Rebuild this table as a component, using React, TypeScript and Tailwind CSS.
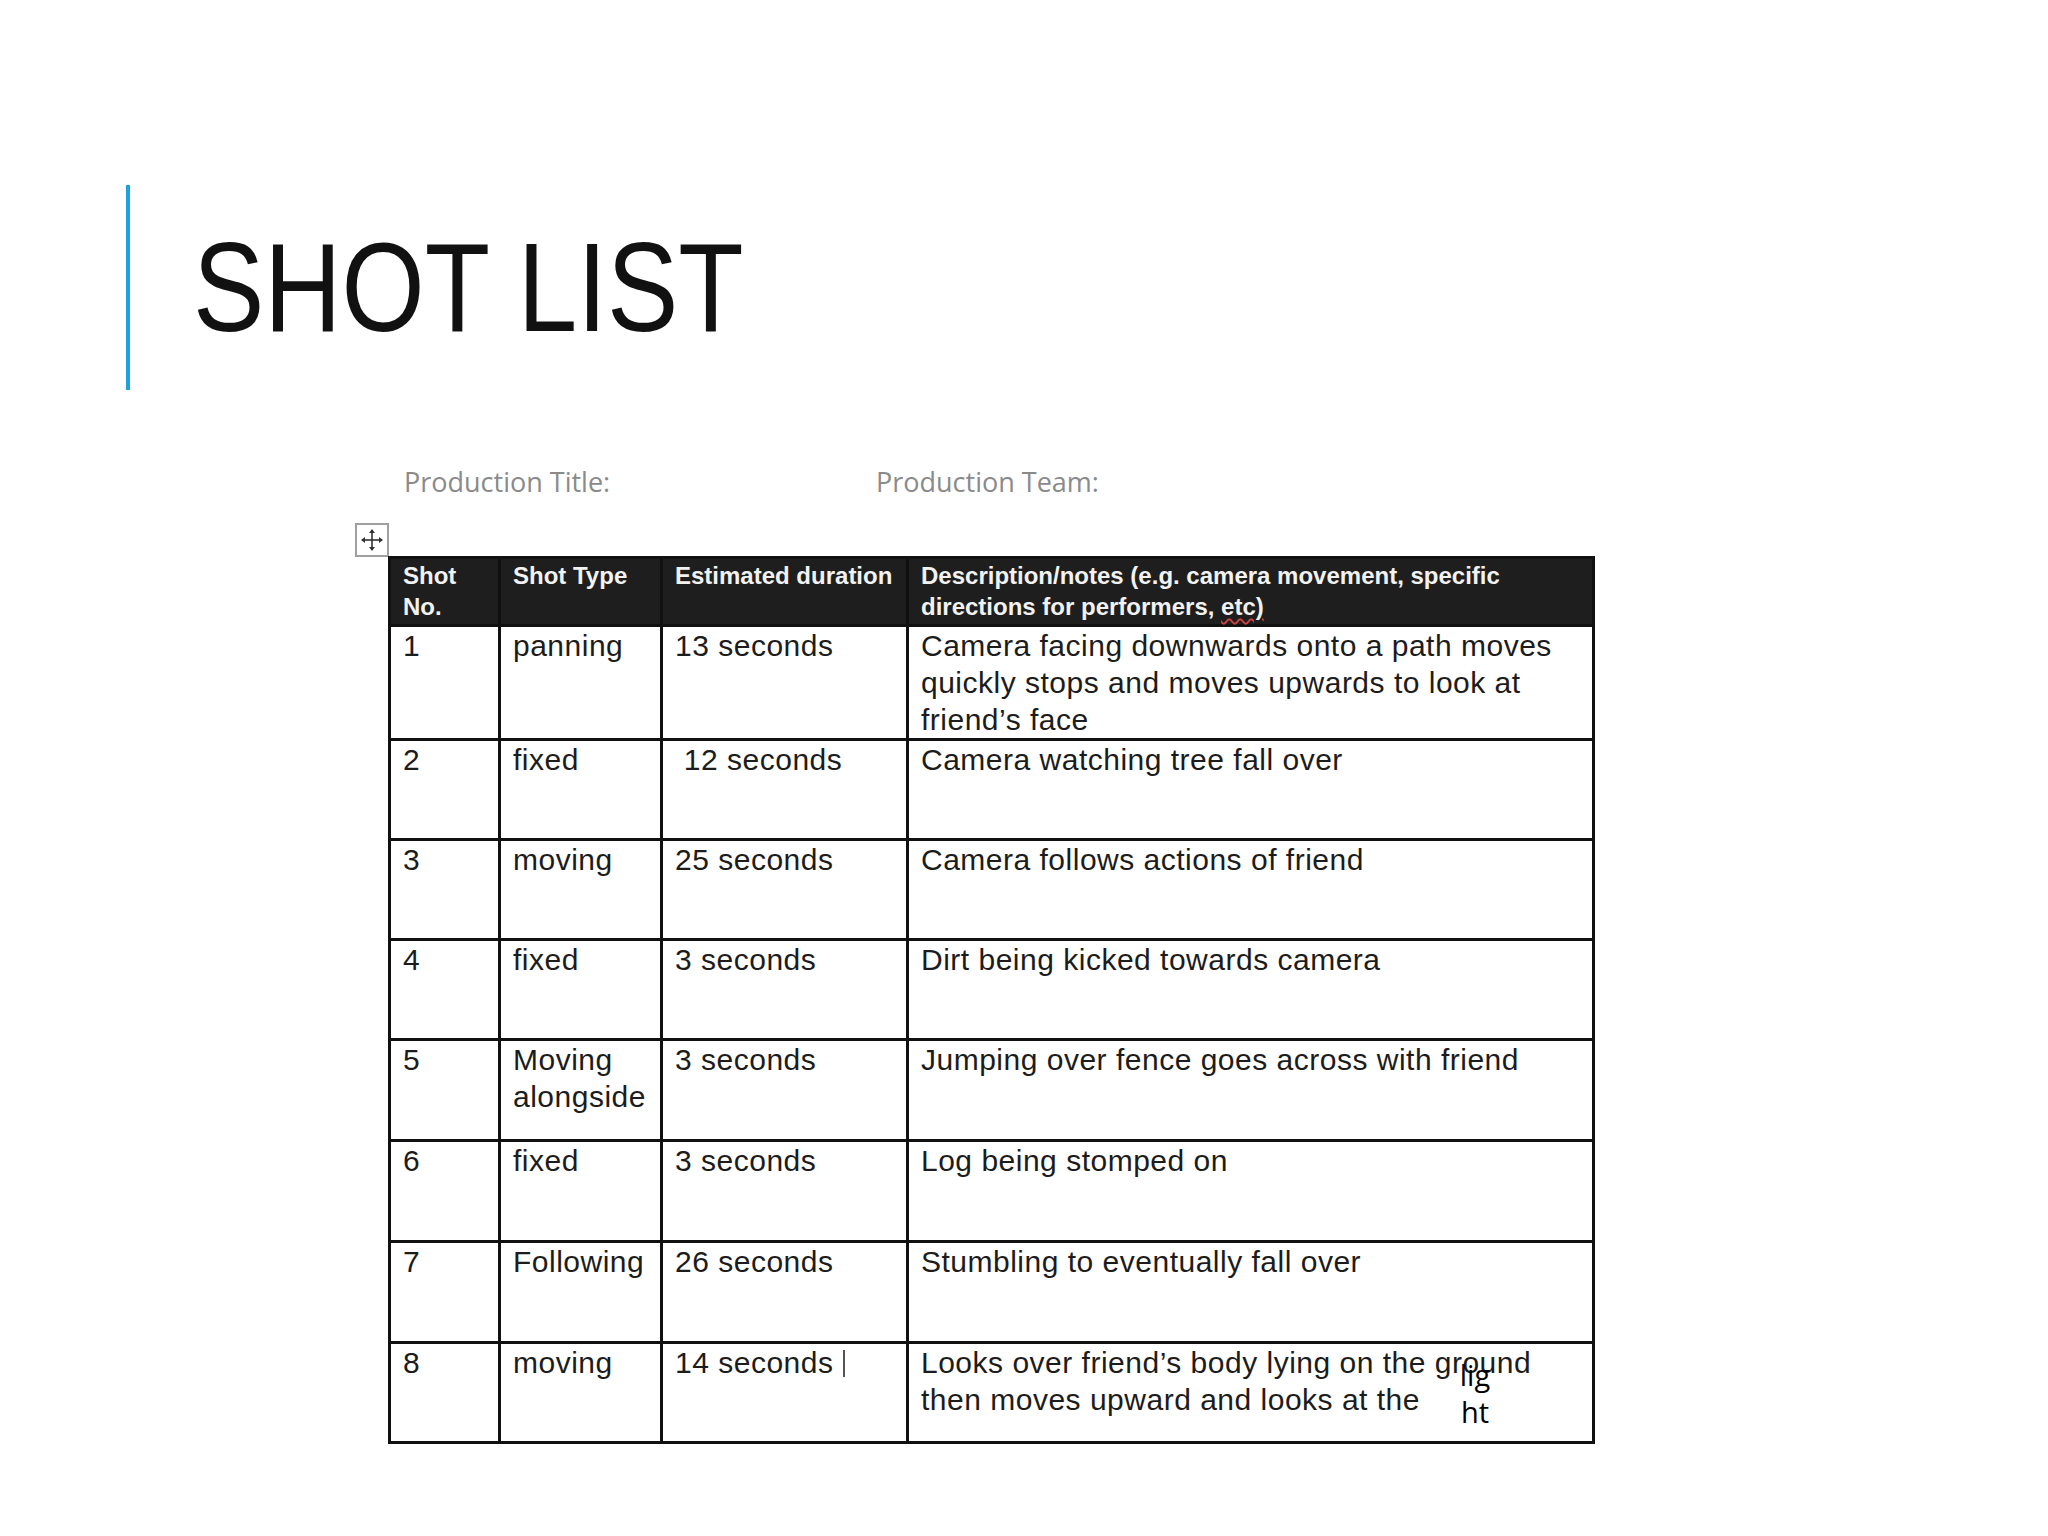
import React from "react";

const rows: { no: string; type: React.ReactNode; dur: React.ReactNode; desc: React.ReactNode; h: string }[] = [
  {
    no: "1",
    type: "panning",
    dur: "13 seconds",
    desc: (
      <>
        Camera facing downwards onto a path moves
        <br />
        quickly stops and moves upwards to look at
        <br />
        friend’s face
      </>
    ),
    h: "h-[114px]",
  },
  { no: "2", type: "fixed", dur: "\u00a012 seconds", desc: "Camera watching tree fall over", h: "h-[100px]" },
  { no: "3", type: "moving", dur: "25 seconds", desc: "Camera follows actions of friend", h: "h-[100px]" },
  { no: "4", type: "fixed", dur: "3 seconds", desc: "Dirt being kicked towards camera", h: "h-[100px]" },
  {
    no: "5",
    type: (
      <>
        Moving
        <br />
        alongside
      </>
    ),
    dur: "3 seconds",
    desc: "Jumping over fence goes across with friend",
    h: "h-[101px]",
  },
  { no: "6", type: "fixed", dur: "3 seconds", desc: "Log being stomped on", h: "h-[101px]" },
  { no: "7", type: "Following", dur: "26 seconds", desc: "Stumbling to eventually fall over", h: "h-[101px]" },
  {
    no: "8",
    type: "moving",
    dur: (
      <>
        14 seconds
        <span className="inline-block w-[2px] h-[27px] bg-[#555] ml-[10px] align-[-4px]" />
      </>
    ),
    desc: (
      <>
        Looks over friend’s body lying on the ground
        <br />
        then moves upward and looks at the
      </>
    ),
    h: "h-[100px]",
  },
];

function MoveIcon() {
  return (
    <div className="w-[34px] h-[34px] border-2 border-[#a0a0a0] bg-white flex items-center justify-center">
      <svg width="24" height="24" viewBox="0 0 24 24">
        <line x1="12" y1="3" x2="12" y2="21" stroke="#333" strokeWidth="1.6" />
        <line x1="3" y1="12" x2="21" y2="12" stroke="#333" strokeWidth="1.6" />
        <polygon points="12,1 9,5 15,5" fill="#333" />
        <polygon points="12,23 9,19 15,19" fill="#333" />
        <polygon points="1,12 5,9 5,15" fill="#333" />
        <polygon points="23,12 19,9 19,15" fill="#333" />
      </svg>
    </div>
  );
}

const headCell =
  "border-r-[3px] border-b-[3px] border-[#111] bg-[#1e1e1e] text-[#f2f2f2] font-bold text-[24px] leading-[31px] pt-[1px] pl-[12px]";
const bodyCell =
  "border-r-[3px] border-b-[3px] border-[#111] text-[#1c1c1c] text-[30px] leading-[37px] pl-[12px] tracking-[0.5px] relative";

export default function App() {
  return (
    <div className="w-[2048px] h-[1536px] bg-white overflow-hidden">
      <div className="pt-[185px] pl-[126px] flex items-center">
        <div className="w-[4px] h-[205px] bg-[#1ba3de]" />
        <h1
          className="ml-[63px] text-[127px] leading-none text-[#111] whitespace-nowrap inline-block origin-left scale-x-[0.842]"
          style={{ fontFamily: '"Liberation Sans", Arial, sans-serif' }}
        >
          SHOT LIST
        </h1>
      </div>

      <div className="ml-[355px]">
        <div
          className="mt-[73px] flex text-[27px] leading-[37px] text-[#8a8a8a]"
          style={{ fontFamily: '"Open Sans", sans-serif' }}
        >
          <span className="ml-[49px] w-[472px]">Production Title:</span>
          <span>Production Team:</span>
        </div>

        <div className="mt-[23px]">
          <MoveIcon />
        </div>

        <div
          className="ml-[33px] -mt-[1px] w-[1207px] grid grid-cols-[110px_162px_246px_686px] border-l-[3px] border-t-[3px] border-[#111]"
          style={{ fontFamily: '"Liberation Sans", Arial, Helvetica, sans-serif' }}
        >
          <div className={`${headCell} h-[68px]`}>
            Shot
            <br />
            No.
          </div>
          <div className={`${headCell} h-[68px]`}>Shot Type</div>
          <div className={`${headCell} h-[68px]`}>Estimated duration</div>
          <div className={`${headCell} h-[68px]`}>
            Description/notes (e.g. camera movement, specific
            <br />
            directions for performers,{" "}
            <span className="underline decoration-wavy decoration-[#d04040] decoration-[1.5px] underline-offset-[3px]">
              etc)
            </span>
          </div>

          {rows.map((r) => (
            <React.Fragment key={r.no}>
              <div className={`${bodyCell} ${r.h}`}>{r.no}</div>
              <div className={`${bodyCell} ${r.h}`}>{r.type}</div>
              <div className={`${bodyCell} ${r.h}`}>{r.dur}</div>
              <div className={`${bodyCell} ${r.h}`}>
                {r.desc}
                {r.no === "8" && (
                  <div
                    className="absolute left-[548px] top-[12px] w-[36px] text-center text-[29px] leading-[37px] text-black tracking-normal"
                    style={{ fontFamily: '"Open Sans", sans-serif' }}
                  >
                    lig
                    <br />
                    ht
                  </div>
                )}
              </div>
            </React.Fragment>
          ))}
        </div>
      </div>
    </div>
  );
}
